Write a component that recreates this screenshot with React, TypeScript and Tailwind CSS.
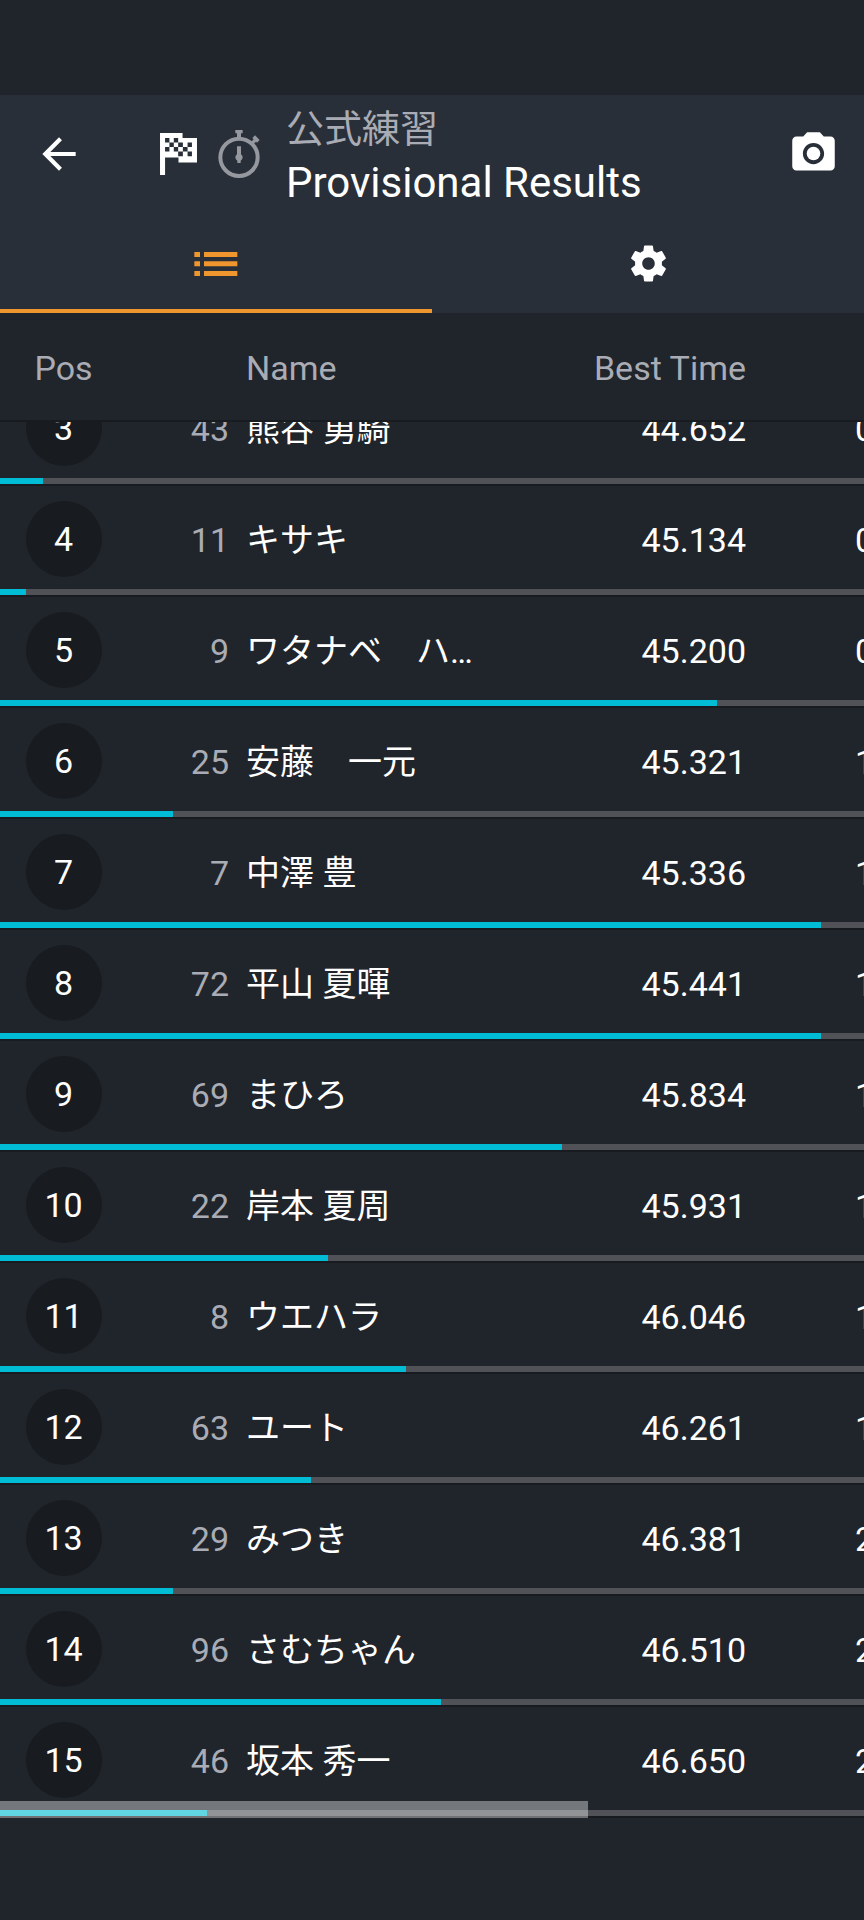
import React, { useState } from 'react';
import { MdArrowBack, MdPhotoCamera } from 'react-icons/md';

type Result = {
  pos: number;
  num: number;
  name: string;
  best: string;
  gap: string;
  progress: number;
};

const results: Result[] = [
  { pos: 3, num: 43, name: '熊谷 勇騎', best: '44.652', gap: '0', progress: 5 },
  { pos: 4, num: 11, name: 'キサキ', best: '45.134', gap: '0', progress: 3 },
  { pos: 5, num: 9, name: 'ワタナベ　ハ…', best: '45.200', gap: '0', progress: 83 },
  { pos: 6, num: 25, name: '安藤　一元', best: '45.321', gap: '1', progress: 20 },
  { pos: 7, num: 7, name: '中澤 豊', best: '45.336', gap: '1', progress: 95 },
  { pos: 8, num: 72, name: '平山 夏暉', best: '45.441', gap: '1', progress: 95 },
  { pos: 9, num: 69, name: 'まひろ', best: '45.834', gap: '1', progress: 65 },
  { pos: 10, num: 22, name: '岸本 夏周', best: '45.931', gap: '1', progress: 38 },
  { pos: 11, num: 8, name: 'ウエハラ', best: '46.046', gap: '1', progress: 47 },
  { pos: 12, num: 63, name: 'ユート', best: '46.261', gap: '1', progress: 36 },
  { pos: 13, num: 29, name: 'みつき', best: '46.381', gap: '2', progress: 20 },
  { pos: 14, num: 96, name: 'さむちゃん', best: '46.510', gap: '2', progress: 51 },
  { pos: 15, num: 46, name: '坂本 秀一', best: '46.650', gap: '2', progress: 24 },
];

const FlagIcon = () => (
  <svg width="37" height="42" viewBox="0 0 110 125" aria-hidden="true">
    <path fill="#fff" d="M0 0h67v15h43v73H55V73H15v52H0z" />
    <path
      fill="#292f38"
      d="M15 15h13v13H15zM41 15h13v13H41zM28 28h13v14H28zM54 28h14v14H54zM82 28h13v14H82zM15 42h13v13H15zM41 42h13v13H41zM68 42h14v13H68zM54 55h14v14H54zM82 55h13v14H82z"
    />
  </svg>
);

const StopwatchIcon = () => (
  <svg width="42" height="50" viewBox="0 0 126 150" aria-hidden="true">
    <circle cx="63" cy="85" r="56" fill="none" stroke="#95989e" strokeWidth="12" />
    <path fill="#95989e" d="M52 3h22v10h-5v18H57V13h-5z" />
    <path fill="#95989e" d="M99 39l8-8-4-4 8-8 14 14-8 8-3-3-8 8z" />
    <path fill="#95989e" d="M57 52h12v24a11 11 0 0 1-1 19v7H58v-7a11 11 0 0 1-1-19z" />
  </svg>
);

const ListIcon = () => (
  <svg width="44" height="26" viewBox="0 0 132 78" fill="currentColor" aria-hidden="true">
    <path d="M1 3h17v15H1zM30 3h100v15H30zM1 31h17v15H1zM30 31h100v15H30zM1 60h17v15H1zM30 60h100v15H30z" />
  </svg>
);

const GearIcon = () => (
  <svg width="43" height="43" viewBox="0 0 24 24" fill="currentColor" aria-hidden="true">
    <path d="M19.43 12.98c.04-.32.07-.64.07-.98s-.03-.66-.07-.98l2.11-1.65c.19-.15.24-.42.12-.64l-2-3.46c-.12-.22-.39-.3-.61-.22l-2.49 1c-.52-.4-1.08-.73-1.69-.98l-.38-2.65C14.46 2.18 14.25 2 14 2h-4c-.25 0-.46.18-.49.42l-.38 2.65c-.61.25-1.17.59-1.69.98l-2.49-1c-.23-.09-.49 0-.61.22l-2 3.46c-.13.22-.07.49.12.64l2.11 1.65c-.04.32-.07.65-.07.98s.03.66.07.98l-2.11 1.65c-.19.15-.24.42-.12.64l2 3.46c.12.22.39.3.61.22l2.49-1c.52.4 1.08.73 1.69.98l.38 2.65c.03.24.24.42.49.42h4c.25 0 .46-.18.49-.42l.38-2.65c.61-.25 1.17-.59 1.69-.98l2.49 1c.23.09.49 0 .61-.22l2-3.46c.12-.22.07-.49-.12-.64l-2.11-1.65zM12 15.5c-1.93 0-3.5-1.57-3.5-3.5s1.57-3.5 3.5-3.5 3.5 1.57 3.5 3.5-1.57 3.5-3.5 3.5z" />
  </svg>
);

// Shared by the header table and the body table so the columns line up
const Columns = () => (
  <colgroup>
    <col className="w-[127px]" />
    <col className="w-[102px]" />
    <col />
    <col className="w-[200px]" />
    <col className="w-[118px]" />
  </colgroup>
);

const App = () => {
  const [tab, setTab] = useState<'list' | 'settings'>('list');

  return (
    <div className="min-h-screen overflow-x-hidden bg-[#20242b] pt-[95px] text-white font-[Roboto,'Noto_Sans_CJK_JP',sans-serif]">
      <header className="bg-[#292f38]">
        <div className="flex h-[117px] items-center pr-[25px]">
          <button type="button" aria-label="Back" className="ml-[34px]">
            <MdArrowBack size={50} />
          </button>
          <div className="ml-[76px] flex items-center gap-[21px]">
            <FlagIcon />
            <StopwatchIcon />
          </div>
          <div className="ml-[26px] flex-1 pt-1">
            <p className="text-[38px] leading-[54px] text-[#a9acb4]">公式練習</p>
            <h1 className="text-[42px] leading-[54px]">Provisional Results</h1>
          </div>
          <button type="button" aria-label="Camera">
            <MdPhotoCamera size={51} />
          </button>
        </div>
        <div role="tablist" className="flex h-[101px]">
          <button
            type="button"
            role="tab"
            aria-label="Results"
            aria-selected={tab === 'list'}
            onClick={() => setTab('list')}
            className={`flex flex-1 items-center justify-center border-b-4 pt-1.5 ${tab === 'list' ? 'border-[#f0962e] text-[#f0962e]' : 'border-transparent'}`}
          >
            <ListIcon />
          </button>
          <button
            type="button"
            role="tab"
            aria-label="Settings"
            aria-selected={tab === 'settings'}
            onClick={() => setTab('settings')}
            className={`flex flex-1 items-center justify-center border-b-4 pt-1.5 ${tab === 'settings' ? 'border-[#f0962e] text-[#f0962e]' : 'border-transparent'}`}
          >
            <GearIcon />
          </button>
        </div>
      </header>

      <main className="relative text-[34px] leading-10">
        <div className="border-b-2 border-[#181b20]">
          <table className="w-full table-fixed text-[#a9acb4]">
            <Columns />
            <thead>
              <tr className="h-[107px]">
                <th className="pt-0.5 text-center font-normal">Pos</th>
                <th></th>
                <th className="pl-[17px] pt-0.5 text-left font-normal">Name</th>
                <th className="pt-0.5 text-right font-normal">Best Time</th>
                <th></th>
              </tr>
            </thead>
          </table>
        </div>

        <div className="overflow-hidden">
          <table className="-mt-[47px] w-full table-fixed">
            <Columns />
            <tbody>
              {results.map((r) => (
                <React.Fragment key={r.pos}>
                  <tr className="h-[103px]">
                    <td className="pt-0.5">
                      <div className="mx-auto flex size-[76px] items-center justify-center rounded-full bg-[#181b1f]">{r.pos}</div>
                    </td>
                    <td className="pt-1 text-right text-[#a9acb4]">{r.num}</td>
                    <td className="truncate pl-[17px] pt-1">{r.name}</td>
                    <td className="pt-1 text-right">{r.best}</td>
                    <td className="overflow-hidden pl-[109px] pt-1">{r.gap}</td>
                  </tr>
                  <tr>
                    <td colSpan={5} className="p-0">
                      <div className="border-b-2 border-[#181b20]">
                        <div className="h-1.5 bg-[#505258]">
                          <div className="h-full bg-[#00bcd4]" style={{ width: `${r.progress}%` }}></div>
                        </div>
                      </div>
                    </td>
                  </tr>
                </React.Fragment>
              ))}
            </tbody>
          </table>
        </div>
        {/* horizontal scroll indicator */}
        <div className="absolute bottom-0 left-0 h-[17px] w-[68%] bg-white/38"></div>
      </main>
    </div>
  );
};

export default App;
